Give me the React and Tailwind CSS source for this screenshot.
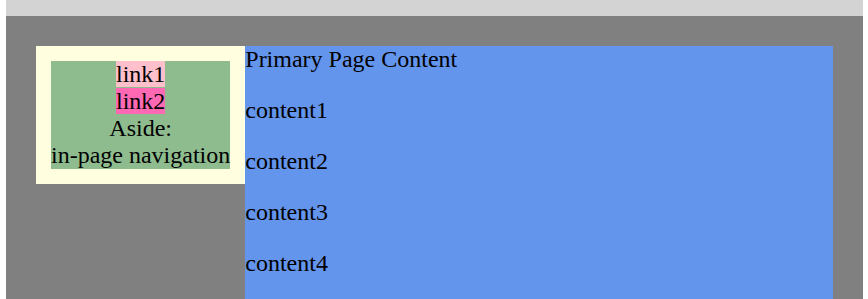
import React from "react";

const App = () => {
  const items = ["content1", "content2", "content3", "content4"];

  return (
    <div className="min-h-screen bg-white">
      <div
        className="ml-[6px] w-[857px] bg-[#d3d3d3] pt-[16px] text-black text-[24px] leading-[normal]"
        style={{ fontFamily: '"Liberation Serif", "Times New Roman", serif' }}
      >
        <div className="flex items-start bg-[#808080] px-[30px] pt-[30px] min-h-[283px]">
          {/* Aside */}
          <aside className="bg-[#ffffe0] p-[15px]">
            <div className="bg-[#8fbc8f] text-center whitespace-nowrap">
              <div>
                <span className="bg-[#ffc0cb]">link1</span>
              </div>
              <div>
                <span className="bg-[#ff69b4]">link2</span>
              </div>
              <div>Aside:</div>
              <div>in-page navigation</div>
            </div>
          </aside>

          {/* Main content */}
          <main className="flex-1 bg-[#6495ed] pb-[24px]">
            <div>Primary Page Content</div>
            {items.map((item) => (
              <p key={item} className="mt-[24px]">
                {item}
              </p>
            ))}
          </main>
        </div>
      </div>
    </div>
  );
};

export default App;
